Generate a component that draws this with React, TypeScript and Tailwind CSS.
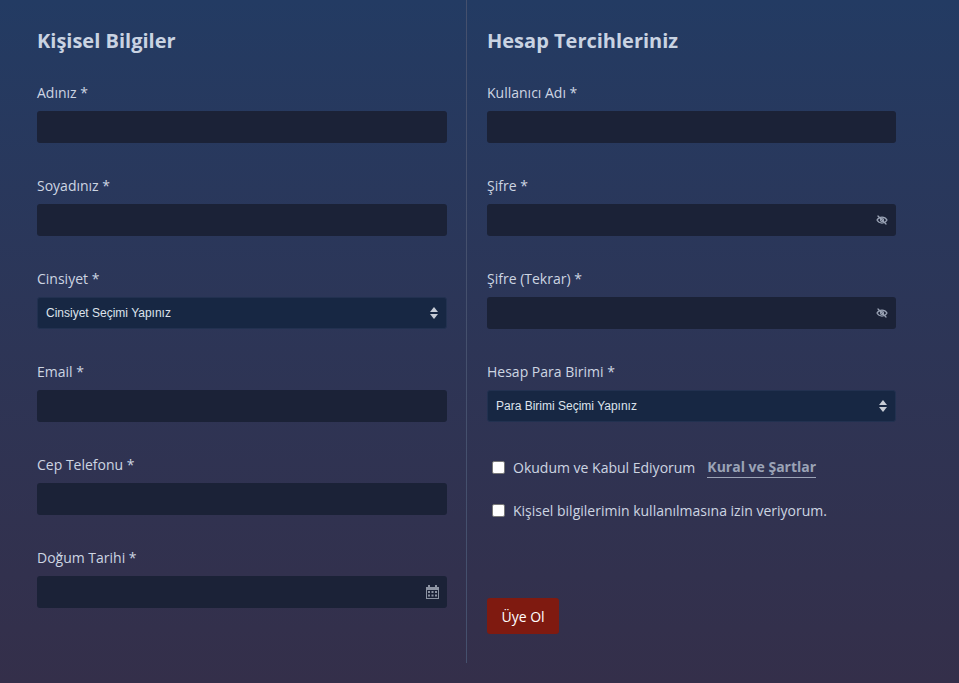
import React from "react";

const EyeOff = () => (
  <svg width="12" height="12" viewBox="0 0 24 24" fill="none" stroke="#9aa3b5" strokeWidth="2.5" strokeLinecap="round">
    <path d="M2 12s3.5-6 10-6 10 6 10 6-3.5 6-10 6S2 12 2 12z" />
    <circle cx="12" cy="12" r="3" />
    <path d="M4 4l16 16" />
  </svg>
);

const Arrows = () => (
  <svg width="8" height="12" viewBox="0 0 8 12" fill="#c7ccd6">
    <path d="M4 0L8 5H0z" />
    <path d="M4 12L0 7h8z" />
  </svg>
);

const Cal = () => (
  <svg width="13" height="14" viewBox="0 0 13 14" fill="#8d94a3">
    <rect x="2" y="0" width="2" height="3" />
    <rect x="9" y="0" width="2" height="3" />
    <path d="M0 2h13v12H0z M1 5v8h11V5z" fillRule="evenodd" />
    <rect x="2" y="6" width="2" height="2" /><rect x="5.5" y="6" width="2" height="2" /><rect x="9" y="6" width="2" height="2" />
    <rect x="2" y="9.5" width="2" height="2" /><rect x="5.5" y="9.5" width="2" height="2" /><rect x="9" y="9.5" width="2" height="2" />
  </svg>
);

function Field({ label, kind, placeholder }: { label: string; kind?: "pw" | "select" | "date"; placeholder?: string }) {
  return (
    <div className="mb-[33px]">
      <div className="h-5 text-[14px] leading-5 text-[#cdd5e2]">{label}</div>
      <div className="mt-2">
        {kind === "select" ? (
          <div className="h-8 rounded-[3px] bg-[#172743] border border-[#223150] flex items-center justify-between px-2 text-[12px] text-[#dde3ec]" style={{ fontFamily: '"Liberation Sans", Arial, sans-serif' }}>
            <span>{placeholder}</span>
            <Arrows />
          </div>
        ) : (
          <div className="h-8 rounded-[3px] bg-[#1b2237] flex items-center justify-end px-2">
            {kind === "pw" && <EyeOff />}
            {kind === "date" && <Cal />}
          </div>
        )}
      </div>
    </div>
  );
}

export default function App() {
  return (
    <div className="min-h-[683px] w-full bg-gradient-to-b from-[#233b63] to-[#342f4a]" style={{ fontFamily: '"Open Sans", sans-serif' }}>
      <div className="flex">
        <div className="w-[467px] pl-[37px] pr-5 pt-[27px] border-r border-[#45506d] pb-[22px]">
          <h2 className="text-[20px] font-bold text-[#c9d3e2] leading-7 mb-[28px]">Kişisel Bilgiler</h2>
          <div className="w-[410px]">
            <Field label="Adınız *" />
            <Field label="Soyadınız *" />
            <Field label="Cinsiyet *" kind="select" placeholder="Cinsiyet Seçimi Yapınız" />
            <Field label="Email *" />
            <Field label="Cep Telefonu *" />
            <Field label="Doğum Tarihi *" kind="date" />
          </div>
        </div>
        <div className="pl-5 pt-[27px]">
          <h2 className="text-[20px] font-bold text-[#c9d3e2] leading-7 mb-[28px]">Hesap Tercihleriniz</h2>
          <div className="w-[409px]">
            <Field label="Kullanıcı Adı *" />
            <Field label="Şifre *" kind="pw" />
            <Field label="Şifre (Tekrar) *" kind="pw" />
            <Field label="Hesap Para Birimi *" kind="select" placeholder="Para Birimi Seçimi Yapınız" />
          </div>
          <div className="mt-[5px] pl-[5px] text-[14px] text-[#cdd5e2]">
            <div className="flex items-center gap-[8px] h-6">
              <span className="w-[13px] h-[13px] bg-white rounded-[2px] border border-[#777]" />
              <span>Okudum ve Kabul Ediyorum</span>
              <span className="ml-1 font-bold text-[#9ba3b6] border-b border-[#9ba3b6] leading-5">Kural ve Şartlar</span>
            </div>
            <div className="flex items-center gap-[8px] h-6 mt-[19px]">
              <span className="w-[13px] h-[13px] bg-white rounded-[2px] border border-[#777]" />
              <span>Kişisel bilgilerimin kullanılmasına izin veriyorum.</span>
            </div>
          </div>
          <button className="mt-[76px] h-9 w-[72px] rounded-[3px] bg-[#7f1a10] text-white text-[14px]">Üye Ol</button>
        </div>
      </div>
    </div>
  );
}
